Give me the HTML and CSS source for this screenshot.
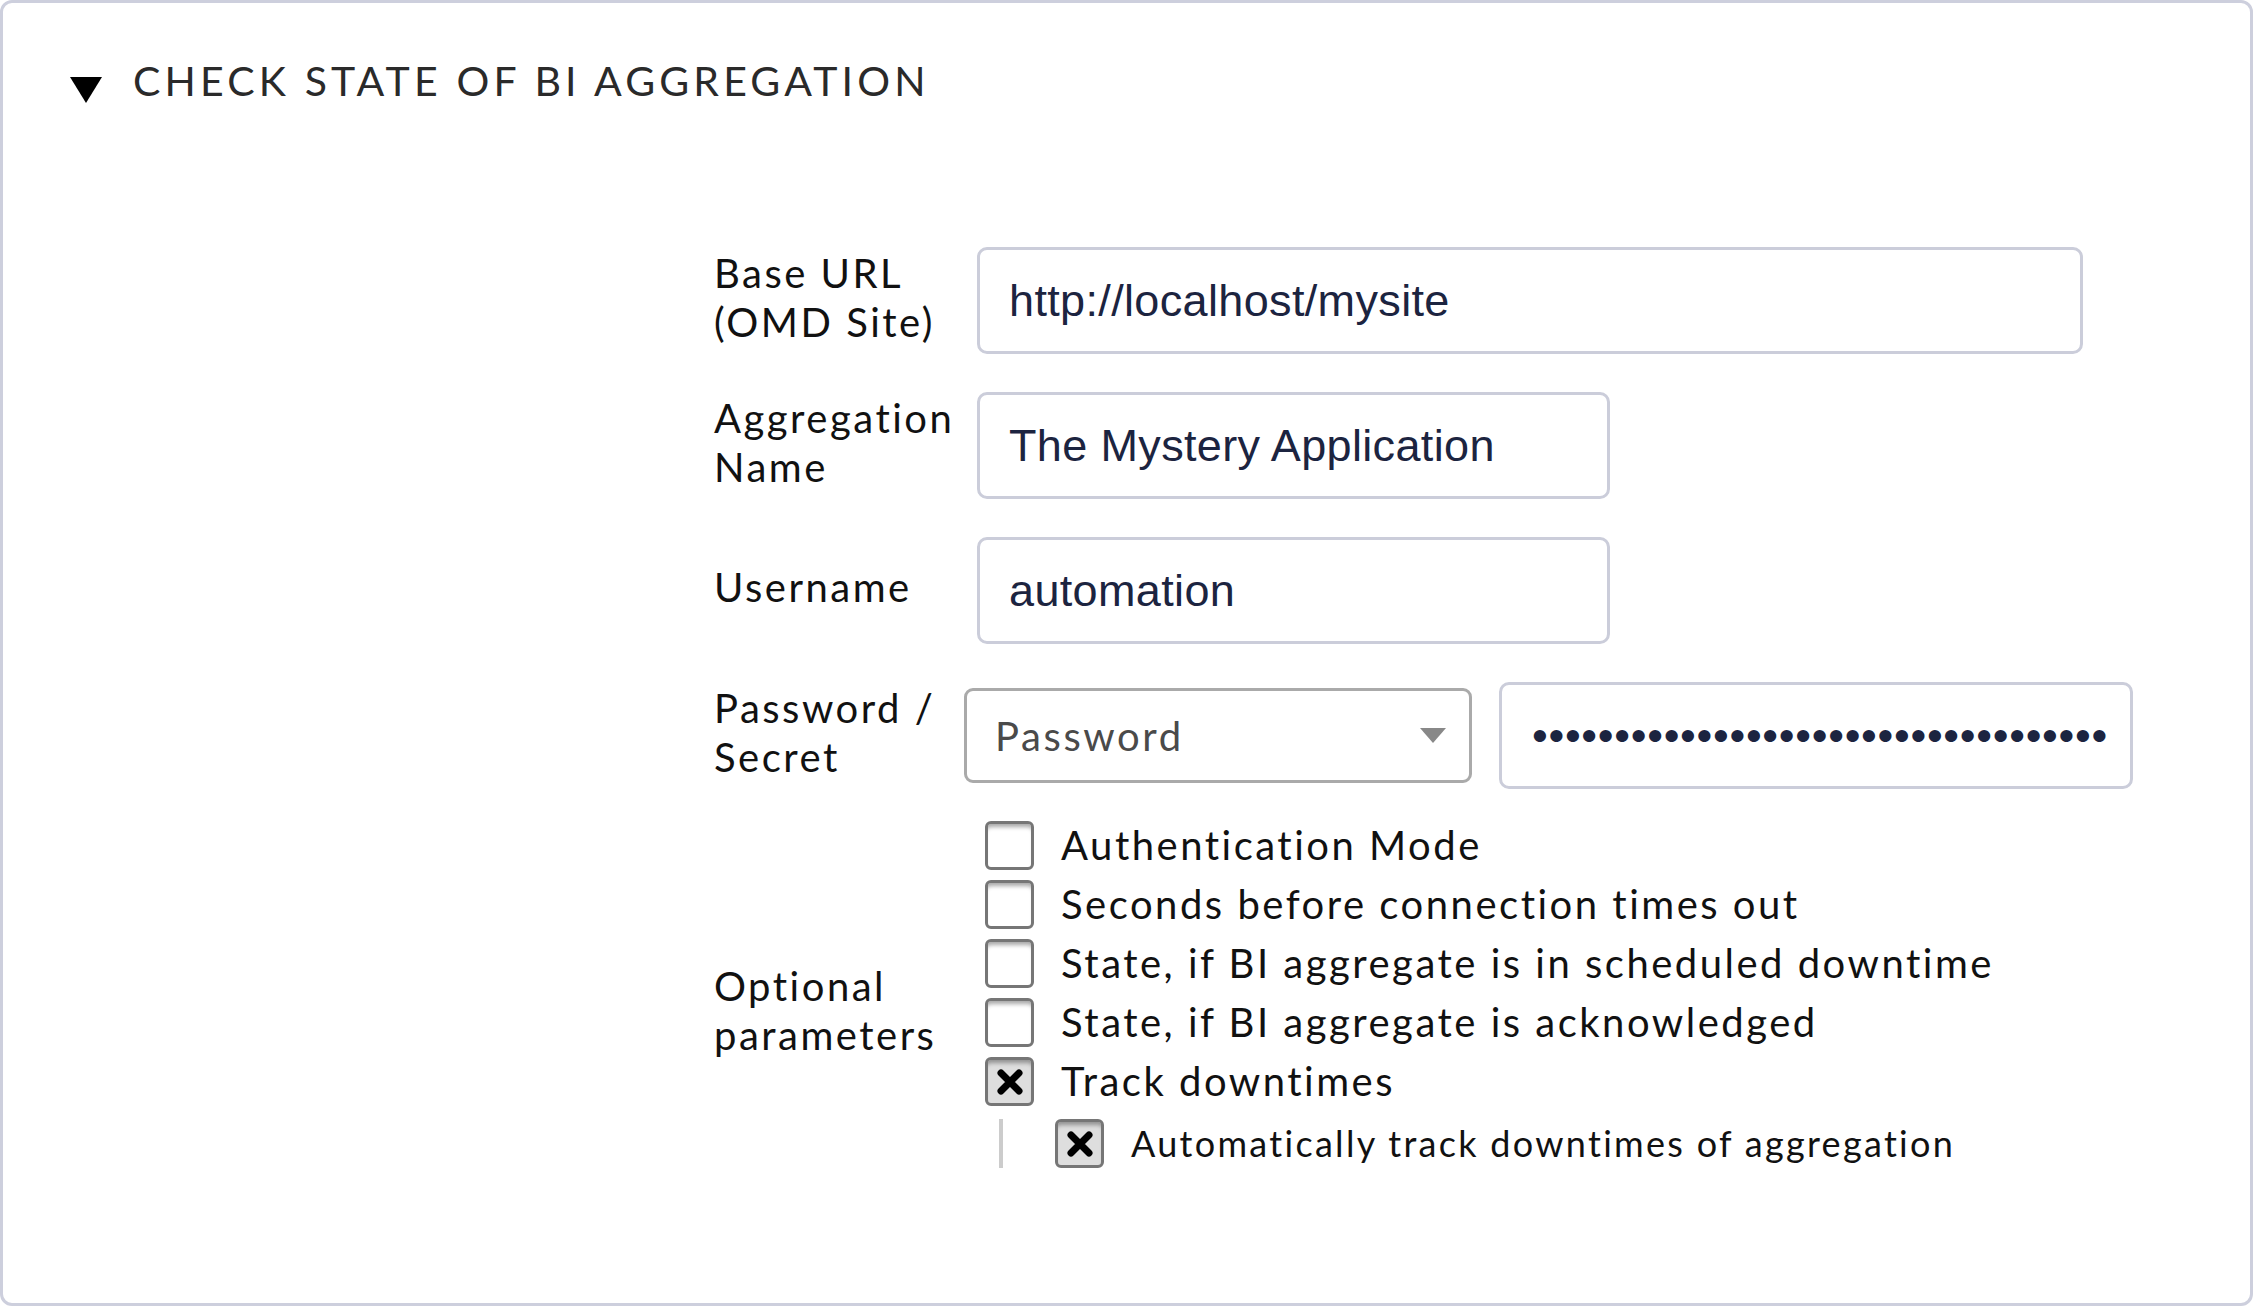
FILE: index.html
```html
<!DOCTYPE html>
<html lang="en">
<head>
<meta charset="utf-8">
<title>Check state of BI Aggregation</title>
<link rel="stylesheet" href="styles.css">
</head>
<body>
<div class="card">
  <div class="head">
    <svg class="tri" width="32" height="26" viewBox="0 0 32 26"><polygon points="0,0 32,0 16,26" fill="#000"/></svg>
    <h2 class="title">CHECK STATE OF BI AGGREGATION</h2>
  </div>
  <div class="form">
    <div class="row">
      <div class="label">Base URL<br>(OMD Site)</div>
      <div class="value"><div class="textbox w-url">http://localhost/mysite</div></div>
    </div>
    <div class="row">
      <div class="label">Aggregation<br>Name</div>
      <div class="value"><div class="textbox w-mid">The Mystery Application</div></div>
    </div>
    <div class="row">
      <div class="label">Username</div>
      <div class="value"><div class="textbox w-mid">automation</div></div>
    </div>
    <div class="row">
      <div class="label">Password /<br>Secret</div>
      <div class="value pwrow">
        <div class="select"><span>Password</span><svg width="26" height="15" viewBox="0 0 26 15"><polygon points="0,0 26,0 13,15" fill="#888"/></svg></div>
        <div class="textbox w-pw">&#8226;&#8226;&#8226;&#8226;&#8226;&#8226;&#8226;&#8226;&#8226;&#8226;&#8226;&#8226;&#8226;&#8226;&#8226;&#8226;&#8226;&#8226;&#8226;&#8226;&#8226;&#8226;&#8226;&#8226;&#8226;&#8226;&#8226;&#8226;&#8226;&#8226;&#8226;&#8226;&#8226;&#8226;&#8226;</div>
      </div>
    </div>
    <div class="row row-opts">
      <div class="label label-opts">Optional<br>parameters</div>
      <div class="value">
        <div class="opts">
          <div class="opt"><span class="cb"></span><span>Authentication Mode</span></div>
          <div class="opt"><span class="cb"></span><span>Seconds before connection times out</span></div>
          <div class="opt"><span class="cb"></span><span>State, if BI aggregate is in scheduled downtime</span></div>
          <div class="opt"><span class="cb"></span><span>State, if BI aggregate is acknowledged</span></div>
          <div class="opt"><span class="cb on"><svg width="28" height="26" viewBox="0 0 28 26"><path d="M5 4 L23 22 M23 4 L5 22" stroke="#000" stroke-width="7" stroke-linecap="round"/></svg></span><span>Track downtimes</span></div>
          <div class="nested">
            <span class="vline"></span>
            <div class="opt sub"><span class="cb on"><svg width="28" height="26" viewBox="0 0 28 26"><path d="M5 4 L23 22 M23 4 L5 22" stroke="#000" stroke-width="7" stroke-linecap="round"/></svg></span><span>Automatically track downtimes of aggregation</span></div>
          </div>
        </div>
      </div>
    </div>
  </div>
</div>
</body>
</html>
```

FILE: styles.css
```css
body {
  margin: 0;
  background: #ffffff;
  font-family: Lato, "Noto Sans", sans-serif;
}

.card {
  box-sizing: border-box;
  width: 2253px;
  height: 1306px;
  border: 3px solid #cdcfdd;
  border-radius: 12px;
  background: #ffffff;
}

.head {
  display: flex;
  align-items: flex-start;
  gap: 31px;
  padding: 53px 0 0 67px;
}

.tri {
  flex: none;
  margin-top: 21px;
}

.title {
  margin: 0;
  font-weight: 400;
  font-size: 41px;
  line-height: 50px;
  letter-spacing: 4.15px;
  color: #2a2a2a;
}

.form {
  margin-top: 141px;
  padding-left: 711px;
  display: flex;
  flex-direction: column;
  gap: 38px;
}

.row {
  display: flex;
  align-items: center;
}

.row-opts {
  margin-top: -6px;
}

.label {
  flex: none;
  width: 250px;
  margin-top: -6px;
  font-size: 40px;
  line-height: 49px;
  letter-spacing: 2.5px;
  color: #111111;
}

.label-opts {
  margin-top: 32px;
}

.value {
  display: flex;
}

.pwrow {
  align-items: center;
}

.textbox {
  box-sizing: border-box;
  height: 107px;
  margin-left: 13px;
  padding-left: 29px;
  border: 3px solid #cbcdda;
  border-radius: 10px;
  display: flex;
  align-items: center;
  font-family: "Liberation Sans", Arial, sans-serif;
  font-size: 45px;
  letter-spacing: 0.35px;
  color: #1c2440;
  white-space: nowrap;
  overflow: hidden;
}

.w-url { width: 1106px; }
.w-mid { width: 633px; }
.w-pw {
  width: 634px;
  margin-left: 27px;
  padding-left: 30px;
  letter-spacing: 0.7px;
}

.select {
  box-sizing: border-box;
  width: 508px;
  height: 95px;
  border: 3px solid #aaaaaa;
  border-radius: 9px;
  padding: 0 23px 0 28px;
  display: flex;
  align-items: center;
  justify-content: space-between;
  font-size: 40px;
  color: #4a4a4a;
  letter-spacing: 2.6px;
}

.opts {
  margin-left: 21px;
  display: flex;
  flex-direction: column;
  gap: 10px;
}

.opt {
  display: flex;
  align-items: center;
  gap: 27px;
  font-size: 40px;
  line-height: 49px;
  letter-spacing: 2.5px;
  color: #111111;
  white-space: nowrap;
}

.cb {
  flex: none;
  box-sizing: border-box;
  width: 49px;
  height: 49px;
  border: 3px solid #767676;
  border-radius: 6px;
  background: #ffffff;
  box-shadow: inset 0 6px 4px -3px rgba(0, 0, 0, 0.35);
}

.cb.on {
  background: #dedede;
  display: flex;
  align-items: center;
  justify-content: center;
}

.nested {
  margin-top: 3px;
  padding-left: 14px;
  display: flex;
  align-items: stretch;
  gap: 52px;
}

.vline {
  flex: none;
  width: 4px;
  background: #cccccc;
}

.opt.sub {
  font-size: 36px;
  letter-spacing: 2.3px;
}
```
